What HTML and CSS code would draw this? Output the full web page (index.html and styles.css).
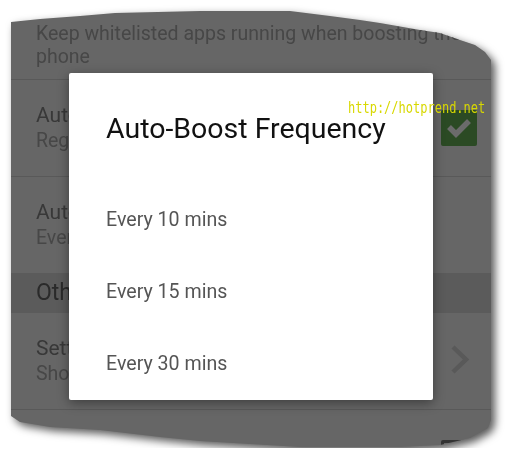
FILE: index.html
```html
<!DOCTYPE html>
<html lang="en">
<head>
    <meta charset="UTF-8">
    <title>Auto-Boost Frequency</title>
    <link rel="stylesheet" href="styles.css">
</head>
<body>
<div class="page">
    <div class="shot">
        <div class="screen">
            <div class="pref pref-tail">
                <div class="pref-summary">Keep whitelisted apps running when boosting the phone</div>
            </div>

            <div class="pref">
                <div class="pref-text">
                    <div class="pref-title">Auto-Boost</div>
                    <div class="pref-summary">Regularly boost the phone</div>
                </div>
                <div class="widget">
                    <div class="checkbox checked">
                        <svg width="36" height="36" viewBox="0 0 36 36">
                            <polyline points="8,17 15,24 28,11" fill="none" stroke="#6b6b6b" stroke-width="5.5"/>
                        </svg>
                    </div>
                </div>
            </div>

            <div class="pref no-line">
                <div class="pref-text">
                    <div class="pref-title">Auto-Boost Frequency</div>
                    <div class="pref-summary">Every 15 mins</div>
                </div>
            </div>

            <div class="section">Others</div>

            <div class="pref">
                <div class="pref-text">
                    <div class="pref-title">Settings</div>
                    <div class="pref-summary">Show more settings</div>
                </div>
                <div class="widget">
                    <svg width="36" height="36" viewBox="0 0 36 36">
                        <polyline points="12,4 25,16.5 12,29" fill="none" stroke="#595959" stroke-width="4.5"/>
                    </svg>
                </div>
            </div>

            <div class="pref">
                <div class="pref-text">
                    <div class="pref-title">Status bar icon</div>
                    <div class="pref-summary">Notification</div>
                </div>
                <div class="widget">
                    <div class="checkbox"></div>
                </div>
            </div>

            <div class="dialog">
                <div class="dialog-title">Auto-Boost Frequency</div>
                <div class="dialog-item">Every 10 mins</div>
                <div class="dialog-item">Every 15 mins</div>
                <div class="dialog-item">Every 30 mins</div>
            </div>
        </div>

        <div class="watermark">http://hotprend.net</div>
    </div>
</div>
</body>
</html>
```

FILE: styles.css
```css
:root {
    --dim-bg: #666666;
    --dim-band: #5b5b5b;
    --dim-line: #595959;
    --dim-title: #383838;
    --dim-summary: #474747;
}

* {
    box-sizing: border-box;
}

body {
    margin: 0;
    background-color: #fff;
    font-family: Roboto, 'Noto Sans', sans-serif;
    -webkit-font-smoothing: antialiased;
}

.page {
    padding: 10px 0 0 11px;
}

.shot {
    position: relative;
    width: 481px;
    height: 438px;
    filter: drop-shadow(4px 4px 4px rgba(0, 0, 0, 0.65));
}

/* torn screenshot edge */
.screen {
    position: relative;
    width: 481px;
    height: 438px;
    overflow: hidden;
    background-color: var(--dim-bg);
    clip-path: polygon(
        0 12px, 29px 9px, 69px 6px, 104px 3px, 189px 1px, 279px 1px, 319px 6px,
        349px 10px, 369px 13px, 409px 20px, 429px 23px, 449px 30px, 464px 35px,
        474px 42px, 480px 50px,
        480px 410px, 477px 418px,
        459px 428px, 429px 435px, 389px 437px, 289px 437px, 189px 431px,
        149px 427px, 89px 420px, 39px 417px, 9px 412px, 0 406px
    );
}

.pref {
    display: flex;
    align-items: center;
    min-height: 97px;
    padding: 0 15px 0 25px;
    border-bottom: 1px solid var(--dim-line);
}

.pref.no-line {
    border-bottom: none;
    min-height: 96px;
}

.pref-tail {
    display: block;
    min-height: 0;
    padding-top: 12px;
    padding-bottom: 11px;
    height: 70px;
}

.pref-tail .pref-summary {
    line-height: 23px;
    width: 470px;
    white-space: nowrap;
}

.pref-tail .pref-summary {
    white-space: normal;
    width: 462px;
}

.pref-text {
    flex: 1;
    min-width: 0;
}

.pref-title {
    font-size: 21px;
    line-height: 25px;
    color: var(--dim-title);
    white-space: nowrap;
}

.pref-summary {
    font-size: 19.5px;
    line-height: 25px;
    color: var(--dim-summary);
}

.widget {
    width: 36px;
    height: 36px;
    flex-shrink: 0;
}

.checkbox {
    width: 36px;
    height: 36px;
    border: 3px solid #333;
    border-radius: 2px;
}

.checkbox.checked {
    border: none;
    background-color: #2b4a24;
}

.checkbox svg {
    display: block;
}

.section {
    height: 40px;
    line-height: 40px;
    padding-left: 25px;
    font-size: 23px;
    color: #2a2a2a;
    background-color: var(--dim-band);
}

.dialog {
    position: absolute;
    left: 58px;
    top: 63px;
    width: 364px;
    background-color: #fff;
    border-radius: 2px;
    box-shadow: 0 3px 12px rgba(0, 0, 0, 0.4);
}

.dialog-title {
    height: 111px;
    padding: 40px 0 0 37px;
    font-size: 28.5px;
    line-height: 32px;
    color: #111;
}

.dialog-item {
    height: 72px;
    line-height: 72px;
    padding-left: 37px;
    font-size: 19.6px;
    color: #555;
}

.watermark {
    position: absolute;
    left: 337px;
    top: 93px;
    font-family: 'DejaVu Sans Mono', monospace;
    font-size: 12px;
    line-height: 14px;
    color: #d8d800;
    transform: scaleY(1.3);
    transform-origin: left bottom;
}
```
